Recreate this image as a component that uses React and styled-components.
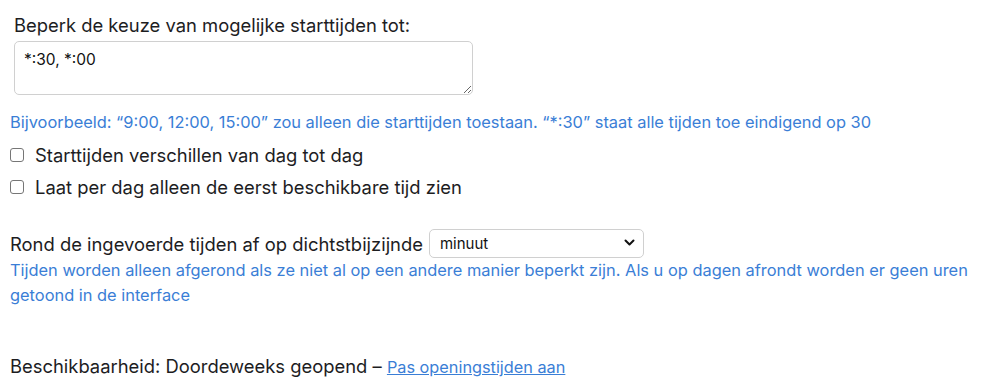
import React from "react";
import styled, { createGlobalStyle } from "styled-components";

const Global = createGlobalStyle`
  body { margin: 0; background: #fff; font-family: Inter, "Liberation Sans", sans-serif; color: #1d1d1f; }
  * { box-sizing: border-box; }
`;

const Page = styled.div`
  padding: 14px 0 0 10px;
  display: flex;
  flex-direction: column;
`;

const FieldLabel = styled.label`
  display: block;
  font-size: 18.4px;
  line-height: 22px;
  padding-left: 4px;
`;

const TextArea = styled.textarea`
  display: block;
  margin: 5px 0 0 4px;
  width: 459px;
  height: 54px;
  border: 1px solid #d0d0d0;
  border-radius: 5px;
  padding: 8px 9px;
  font-family: inherit;
  font-size: 15.5px;
  line-height: 20px;
  color: #111;
  resize: vertical;
  outline: none;
`;

const Hint = styled.div`
  color: #3a7ed6;
  font-size: 16.4px;
  line-height: 25px;
  margin-top: ${(p) => p.$mt || 0}px;
`;

const CheckList = styled.div`
  display: flex;
  flex-direction: column;
  margin-top: 4px;
`;

const CheckRow = styled.label`
  display: flex;
  align-items: center;
  gap: 11px;
  font-size: 18.4px;
  height: 32px;
`;

const Box = styled.input`
  margin: 0;
  width: 14px;
  height: 14px;
  appearance: none;
  border: 1px solid #767676;
  border-radius: 3px;
  background: #fff;
`;

const InlineRow = styled.div`
  display: flex;
  align-items: center;
  gap: 6px;
  font-size: 18.4px;
  margin-top: ${(p) => p.$mt || 0}px;
`;

const SelectWrap = styled.div`
  position: relative;
  width: 215px;
  height: 29px;
`;

const Select = styled.select`
  appearance: none;
  width: 100%;
  height: 100%;
  border: 1px solid #d0d0d0;
  border-radius: 5px;
  background: #fff;
  padding: 0 10px;
  font-family: inherit;
  font-size: 15px;
  color: #111;
`;

const Chevron = styled.svg`
  position: absolute;
  right: 9px;
  top: 10px;
  pointer-events: none;
`;

const Footer = styled.div`
  font-size: 18.4px;
  line-height: 22px;
  margin-top: 47px;
`;

const Link = styled.a`
  color: #3a7ed6;
  text-decoration: underline;
  font-size: 16.3px;
`;

export default function App() {
  return (
    <>
      <Global />
      <Page>
        <FieldLabel>Beperk de keuze van mogelijke starttijden tot:</FieldLabel>
        <TextArea defaultValue="*:30, *:00" />
        <Hint $mt={15}>
          Bijvoorbeeld: “9:00, 12:00, 15:00” zou alleen die starttijden toestaan. “*:30” staat alle tijden toe eindigend op 30
        </Hint>
        <CheckList>
          <CheckRow>
            <Box type="checkbox" />
            Starttijden verschillen van dag tot dag
          </CheckRow>
          <CheckRow>
            <Box type="checkbox" />
            Laat per dag alleen de eerst beschikbare tijd zien
          </CheckRow>
        </CheckList>
        <InlineRow $mt={26}>
          Rond de ingevoerde tijden af op dichtstbijzijnde
          <SelectWrap>
            <Select defaultValue="minuut">
              <option value="minuut">minuut</option>
            </Select>
            <Chevron width="11" height="8" viewBox="0 0 11 8">
              <path d="M1.5 1.5 L5.5 5.5 L9.5 1.5" fill="none" stroke="#111" strokeWidth="2" strokeLinecap="round" strokeLinejoin="round" />
            </Chevron>
          </SelectWrap>
        </InlineRow>
        <Hint>
          Tijden worden alleen afgerond als ze niet al op een andere manier beperkt zijn. Als u op dagen afrondt worden er geen uren getoond in de interface
        </Hint>
        <Footer>
          Beschikbaarheid: Doordeweeks geopend – <Link href="#">Pas openingstijden aan</Link>
        </Footer>
      </Page>
    </>
  );
}
